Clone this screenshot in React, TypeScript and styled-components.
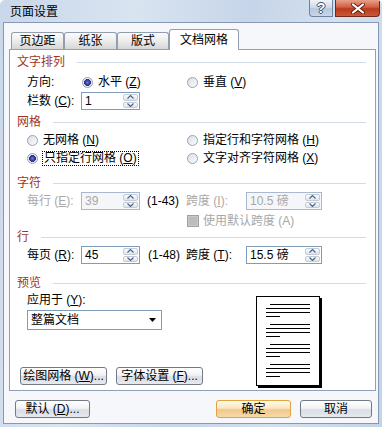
import React from "react";
import styled, { createGlobalStyle } from "styled-components";

const GlobalStyle = createGlobalStyle`
  html, body { margin: 0; padding: 0; background: #fff; }
  body {
    font-family: "Liberation Sans", "Noto Sans CJK SC", sans-serif;
    font-size: 12px;
    line-height: 14px;
    color: #000;
  }
  * { box-sizing: border-box; }
`;

const Window = styled.div`
  width: 382px;
  height: 427px;
  display: flex;
  flex-direction: column;
  background: linear-gradient(100deg, #c8d7ea 0%, #d9e4f1 30%, #c6d5e9 55%, #d4e0ee 75%, #c3d3e8 100%);
  border-radius: 5px 5px 0 0;
  overflow: hidden;
`;

const TitleBar = styled.div`
  height: 22px;
  flex: none;
  display: flex;
  align-items: flex-start;
  padding-left: 10px;
`;

const Title = styled.div`
  margin-top: 5px;
  line-height: 14px;
`;

const CaptionGroup = styled.div`
  margin-left: auto;
  margin-right: 2px;
  display: flex;
  gap: 2px;
`;

const CaptionButton = styled.div<{ $kind: "help" | "close" }>`
  width: ${p => (p.$kind === "close" ? 45 : 24)}px;
  height: 17px;
  display: flex;
  align-items: center;
  justify-content: center;
  border: 1px solid ${p => (p.$kind === "close" ? "#6e2b1b" : "#6d83a2")};
  border-top: none;
  border-radius: ${p => (p.$kind === "close" ? "0 0 4px 0" : "0 0 0 4px")};
  background: ${p =>
    p.$kind === "close"
      ? "linear-gradient(#e8a08b, #d25d40 45%, #b93a1c 55%, #c9583a)"
      : "linear-gradient(#eef3f9, #cfdbea 45%, #b7c9df 55%, #c8d6e8)"};
  color: #fff;
  font-family: "Liberation Sans", sans-serif;
  font-weight: bold;
  font-size: 14px;
  text-shadow: 1px 0 #3e4e66, -1px 0 #3e4e66, 0 1px #3e4e66, 0 -1px #3e4e66;
`;

const Client = styled.div`
  flex: 1;
  margin: 0 3px 3px;
  border: 1px solid #8599b6;
  background: #f5f7fb;
  padding: 6px 2px 0 5px;
  display: flex;
  flex-direction: column;
`;

const TabRow = styled.div`
  height: 20px;
  flex: none;
  display: flex;
  align-items: flex-end;
  margin-left: 2px;
  position: relative;
  z-index: 2;
`;

const Tab = styled.div<{ $w: number; $active?: boolean }>`
  width: ${p => p.$w}px;
  height: ${p => (p.$active ? 21 : 17)}px;
  margin-bottom: ${p => (p.$active ? -1 : 0)}px;
  display: flex;
  align-items: center;
  justify-content: center;
  border: 1px solid #919eb0;
  border-bottom: none;
  border-radius: 3px 3px 0 0;
  background: ${p => (p.$active ? "#fff" : "linear-gradient(#fbfbfb, #ececec 50%, #d6d6d6)")};
`;

const Panel = styled.div`
  height: 342px;
  flex: none;
  border: 1px solid #8fa0b7;
  background: #fff;
  padding: 5px 9px 0 7px;
  display: flex;
  flex-direction: column;
`;

const SectionHead = styled.div<{ $mt?: number }>`
  height: 14px;
  margin-top: ${p => p.$mt ?? 0}px;
  display: flex;
  align-items: center;
  gap: 12px;
  color: #a1351b;
  &::after {
    content: "";
    flex: 1;
    height: 1px;
    background: #d3dbe6;
  }
`;

const Row = styled.div<{ $mt?: number; $h?: number; $indent?: number }>`
  height: ${p => p.$h ?? 18}px;
  margin-top: ${p => p.$mt ?? 0}px;
  padding-left: ${p => p.$indent ?? 10}px;
  display: flex;
  align-items: center;
  flex: none;
`;

const Cell = styled.div<{ $w: number; $ml?: number; $muted?: boolean }>`
  width: ${p => p.$w}px;
  margin-left: ${p => p.$ml ?? 0}px;
  flex: none;
  display: flex;
  align-items: center;
  white-space: pre;
  color: ${p => (p.$muted ? "#a8a8a8" : "#000")};
`;

const Text = styled.span`
  white-space: pre;
`;

const Key = styled.span`
  text-decoration: underline;
`;

const RadioDot = styled.span<{ $on?: boolean }>`
  width: 11px;
  height: 11px;
  flex: none;
  margin-right: 5px;
  border-radius: 50%;
  border: 1px solid #98a3b2;
  background: ${p =>
    p.$on
      ? "radial-gradient(circle, #6e7be0 0, #2b3592 2.6px, #27318a 3.2px, #eef1f5 3.7px, #dfe4eb 100%)"
      : "linear-gradient(135deg, #d9dfe8, #fbfcfd)"};
`;

const Focus = styled.span`
  border: 1px dotted #000;
  padding: 0 1px;
  line-height: 13px;
  margin-left: -1px;
  white-space: pre;
`;

const SpinBox = styled.div<{ $w: number; $disabled?: boolean }>`
  width: ${p => p.$w}px;
  height: 18px;
  flex: none;
  display: flex;
  align-items: stretch;
  padding: 1px;
  border: 1px solid ${p => (p.$disabled ? "#a9bad0" : "#7f9db9")};
  background: ${p => (p.$disabled ? "#f4f6f9" : "#fff")};
  color: ${p => (p.$disabled ? "#a8a8a8" : "#000")};
`;

const SpinValue = styled.span`
  flex: 1;
  padding-left: 2px;
  display: flex;
  align-items: center;
  white-space: pre;
`;

const SpinButtons = styled.div`
  width: 15px;
  display: flex;
  flex-direction: column;
  gap: 1px;
`;

const SpinHalf = styled.div`
  flex: 1;
  display: flex;
  align-items: center;
  justify-content: center;
  border: 1px solid #c4ccd8;
  border-radius: 2px;
  background: linear-gradient(#fafbfc, #dfe4eb);
`;

const Check = styled.span`
  width: 12px;
  height: 12px;
  flex: none;
  margin-right: 4px;
  border: 1px solid #a1a1a1;
  background: #bcbcbc;
  box-shadow: inset 0 0 0 1px #c9c9c9;
`;

const PreviewBlock = styled.div`
  flex: 1;
  display: flex;
`;

const PreviewLeft = styled.div`
  width: 239px;
  display: flex;
  flex-direction: column;
  padding-bottom: 5px;
`;

const Select = styled.div`
  width: 135px;
  height: 20px;
  margin: 3px 0 0 10px;
  border: 1px solid #7f9db9;
  background: #fff;
  display: flex;
  align-items: center;
  justify-content: space-between;
  padding: 0 5px 0 3px;
`;

const ButtonRow = styled.div<{ $pl?: number; $pr?: number }>`
  margin-top: auto;
  padding-left: ${p => p.$pl ?? 0}px;
  padding-right: ${p => p.$pr ?? 0}px;
  display: flex;
  gap: 9px;
  flex: none;
`;

const Button = styled.button<{ $w: number; $primary?: boolean; $push?: boolean }>`
  width: ${p => p.$w}px;
  height: 18px;
  padding: 0;
  margin-left: ${p => (p.$push ? "auto" : "0")};
  font: inherit;
  line-height: 14px;
  color: #000;
  white-space: pre;
  border: 1px solid ${p => (p.$primary ? "#e0a33e" : "#727a86")};
  border-radius: 3px;
  background: ${p =>
    p.$primary
      ? "linear-gradient(#fffaf0, #fbe6bf 45%, #f0c88f 55%, #f6d9a9)"
      : "linear-gradient(#ffffff, #f1f2f4 45%, #dadee5 55%, #e6e9ee)"};
`;

const Footer = styled(ButtonRow)`
  margin-top: 9px;
`;

const PageArt = styled.svg`
  margin-top: 6px;
  flex: none;
`;

const Chevron = ({ up }: { up?: boolean }) => (
  <svg width="7" height="4" viewBox="0 0 7 4">
    <path d={up ? "M0.5 3.5 L3.5 0.5 L6.5 3.5" : "M0.5 0.5 L3.5 3.5 L6.5 0.5"} fill="none" stroke="#4b5f86" strokeWidth="1.1" />
  </svg>
);

const Spin = ({ w, value, disabled }: { w: number; value: string; disabled?: boolean }) => (
  <SpinBox $w={w} $disabled={disabled}>
    <SpinValue>{value}</SpinValue>
    <SpinButtons>
      <SpinHalf><Chevron up /></SpinHalf>
      <SpinHalf><Chevron /></SpinHalf>
    </SpinButtons>
  </SpinBox>
);

const PreviewPage = () => {
  const groups = [8, 28, 48, 68];
  return (
    <PageArt width="67" height="93" viewBox="0 0 67 93">
      <rect x="2" y="2" width="64" height="90" fill="#000" />
      <rect x="0.5" y="0.5" width="63" height="89" fill="#fff" stroke="#000" />
      {groups.map(g => (
        <g key={g} fill="#000">
          <rect x="14" y={g} width="40" height="1" />
          <rect x="10" y={g + 4} width="44" height="1" />
          <rect x="10" y={g + 8} width="44" height="1" />
          <rect x="10" y={g + 12} width="14" height="1" />
        </g>
      ))}
    </PageArt>
  );
};

export default function App() {
  return (
    <>
      <GlobalStyle />
      <Window>
        <TitleBar>
          <Title>页面设置</Title>
          <CaptionGroup>
            <CaptionButton $kind="help">?</CaptionButton>
            <CaptionButton $kind="close">
              <svg width="16" height="11" viewBox="0 0 16 11">
                <path d="M3 1.5 L13 9.5 M13 1.5 L3 9.5" stroke="#5b2416" strokeWidth="4" strokeLinecap="round" />
                <path d="M3 1.5 L13 9.5 M13 1.5 L3 9.5" stroke="#fff" strokeWidth="2.2" strokeLinecap="round" />
              </svg>
            </CaptionButton>
          </CaptionGroup>
        </TitleBar>

        <Client>
          <TabRow>
            <Tab $w={53}>页边距</Tab>
            <Tab $w={53}>纸张</Tab>
            <Tab $w={52}>版式</Tab>
            <Tab $w={70} $active>文档网格</Tab>
          </TabRow>

          <Panel>
            <SectionHead>文字排列</SectionHead>
            <Row $mt={4}>
              <Cell $w={55}><Text>方向:</Text></Cell>
              <Cell $w={105}><RadioDot $on /><Text>水平 (<Key>Z</Key>)</Text></Cell>
              <Cell $w={120}><RadioDot /><Text>垂直 (<Key>V</Key>)</Text></Cell>
            </Row>
            <Row $mt={1}>
              <Cell $w={54}><Text>栏数 (<Key>C</Key>):</Text></Cell>
              <Spin w={59} value="1" />
            </Row>

            <SectionHead $mt={5}>网格</SectionHead>
            <Row $mt={3} $h={16}>
              <Cell $w={160}><RadioDot /><Text>无网格 (<Key>N</Key>)</Text></Cell>
              <Cell $w={160}><RadioDot /><Text>指定行和字符网格 (<Key>H</Key>)</Text></Cell>
            </Row>
            <Row $mt={2} $h={16}>
              <Cell $w={160}><RadioDot $on /><Focus>只指定行网格 (<Key>O</Key>)</Focus></Cell>
              <Cell $w={160}><RadioDot /><Text>文字对齐字符网格 (<Key>X</Key>)</Text></Cell>
            </Row>

            <SectionHead $mt={10}>字符</SectionHead>
            <Row $mt={2}>
              <Cell $w={54} $muted><Text>每行 (<Key>E</Key>):</Text></Cell>
              <Spin w={59} value="39" disabled />
              <Cell $w={39} $ml={7}><Text>(1-43)</Text></Cell>
              <Cell $w={60} $muted><Text>跨度 (<Key>I</Key>):</Text></Cell>
              <Spin w={76} value="10.5 磅" disabled />
            </Row>
            <Row $mt={4} $h={14} $indent={170}>
              <Cell $w={160} $muted><Check /><Text>使用默认跨度 (A)</Text></Cell>
            </Row>

            <SectionHead $mt={2}>行</SectionHead>
            <Row $mt={2}>
              <Cell $w={54}><Text>每页 (<Key>R</Key>):</Text></Cell>
              <Spin w={59} value="45" />
              <Cell $w={38} $ml={8}><Text>(1-48)</Text></Cell>
              <Cell $w={60}><Text>跨度 (<Key>T</Key>):</Text></Cell>
              <Spin w={76} value="15.5 磅" />
            </Row>

            <SectionHead $mt={12}>预览</SectionHead>
            <PreviewBlock>
              <PreviewLeft>
                <Row $mt={3} $h={14}>
                  <Cell $w={120}><Text>应用于 (<Key>Y</Key>):</Text></Cell>
                </Row>
                <Select>
                  <Text>整篇文档</Text>
                  <svg width="7" height="4" viewBox="0 0 7 4">
                    <polygon points="0,0 7,0 3.5,4" fill="#000" />
                  </svg>
                </Select>
                <ButtonRow $pl={3}>
                  <Button $w={87}>绘图网格 (<Key>W</Key>)...</Button>
                  <Button $w={87}>字体设置 (<Key>F</Key>)...</Button>
                </ButtonRow>
              </PreviewLeft>
              <PreviewPage />
            </PreviewBlock>
          </Panel>

          <Footer $pl={6} $pr={4}>
            <Button $w={75}>默认 (<Key>D</Key>)...</Button>
            <Button $w={75} $primary $push>确定</Button>
            <Button $w={72}>取消</Button>
          </Footer>
        </Client>
      </Window>
    </>
  );
}
